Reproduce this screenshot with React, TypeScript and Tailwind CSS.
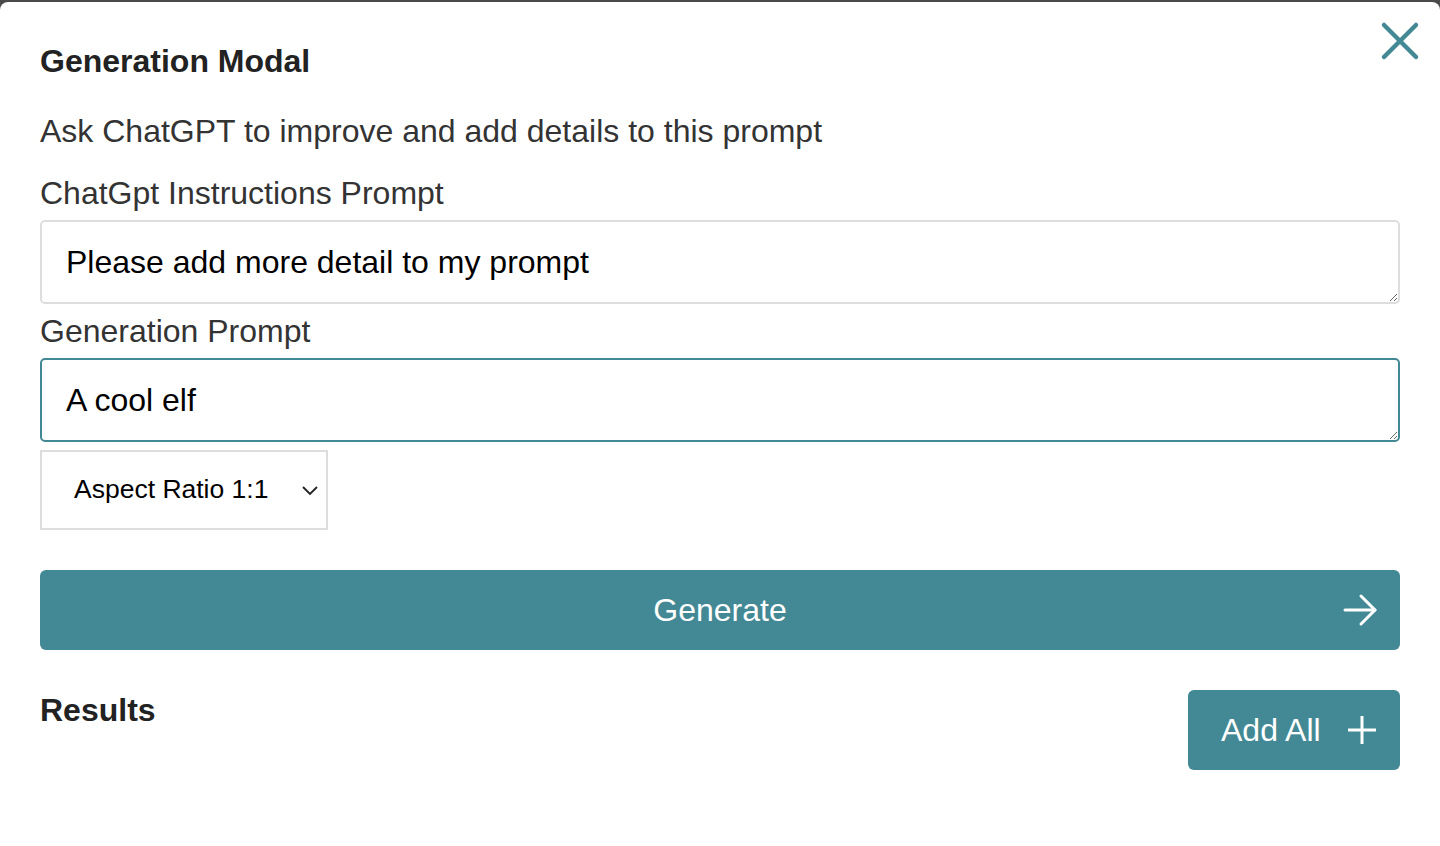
import { useState } from "react";

const TEAL = "#438995";

const ArrowRight = () => (
  <svg width="36" height="36" viewBox="0 0 36 36" fill="none" stroke="white" strokeWidth="3" strokeLinecap="round" strokeLinejoin="round">
    <path d="M3 18h30" />
    <path d="M19 4l14 14-14 14" />
  </svg>
);

const Plus = () => (
  <svg width="30" height="30" viewBox="0 0 30 30" fill="none" stroke="white" strokeWidth="3">
    <path d="M15 1v28" />
    <path d="M1 15h28" />
  </svg>
);

export default function App() {
  const [instructions, setInstructions] = useState("Please add more detail to my prompt");
  const [prompt, setPrompt] = useState("A cool elf");

  return (
    <div className="h-screen bg-[#4a4a4a] pt-[2px]" style={{ fontFamily: '"Liberation Sans", Arial, sans-serif' }}>
      <div className="relative h-full rounded-t-lg bg-white px-10">
        <button className="absolute right-[20px] top-[19px] p-0" aria-label="Close">
          <svg width="40" height="40" viewBox="0 0 40 40" fill="none" stroke={TEAL} strokeWidth="4.5" strokeLinecap="round">
            <path d="M4 4l32 32" />
            <path d="M36 4L4 36" />
          </svg>
        </button>

        <h2 className="pt-[42px] text-[32px] font-bold leading-[34px] text-[#222]">Generation Modal</h2>

        <p className="mt-[36px] text-[32px] leading-[34px] text-[#333]">
          Ask ChatGPT to improve and add details to this prompt
        </p>

        <label className="mt-[28px] block text-[32px] leading-[34px] text-[#333]">ChatGpt Instructions Prompt</label>
        <textarea
          value={instructions}
          onChange={(e) => setInstructions(e.target.value)}
          rows={1}
          className="mt-[10px] block h-[84px] w-full rounded-[5px] border-2 border-[#dddddd] px-[24px] py-[22px] text-[32px] leading-[36px] text-black outline-none"
        />

        <label className="mt-[10px] block text-[32px] leading-[34px] text-[#333]">Generation Prompt</label>
        <textarea
          value={prompt}
          onChange={(e) => setPrompt(e.target.value)}
          rows={1}
          className="mt-[10px] block h-[84px] w-full rounded-[5px] border-2 border-[#438995] px-[24px] py-[22px] text-[32px] leading-[36px] text-black outline-none"
        />

        <div className="relative mt-[8px] w-[288px]">
          <select className="block h-[80px] w-full appearance-none border-2 border-[#dddddd] bg-white pl-[32px] pr-[40px] text-[26.5px] text-black outline-none">
            <option>Aspect Ratio 1:1</option>
            <option>Aspect Ratio 16:9</option>
            <option>Aspect Ratio 9:16</option>
          </select>
          <svg className="pointer-events-none absolute right-[9px] top-[34px]" width="18" height="12" viewBox="0 0 18 12" fill="none" stroke="#222" strokeWidth="1.8">
            <path d="M2 3l7 7 7-7" />
          </svg>
        </div>

        <button
          className="relative mt-[40px] flex h-[80px] w-full items-center justify-center rounded-[6px] text-[32px] text-white"
          style={{ backgroundColor: TEAL }}
        >
          Generate
          <span className="absolute right-[22px] top-[22px]">
            <ArrowRight />
          </span>
        </button>

        <div className="mt-[40px] flex items-start justify-between">
          <h3 className="text-[32px] font-bold leading-[40px] text-[#222]">Results</h3>
          <button
            className="flex h-[80px] w-[212px] items-center gap-[26px] rounded-[6px] pl-[33px] text-[32px] text-white"
            style={{ backgroundColor: TEAL }}
          >
            Add All
            <Plus />
          </button>
        </div>
      </div>
    </div>
  );
}
